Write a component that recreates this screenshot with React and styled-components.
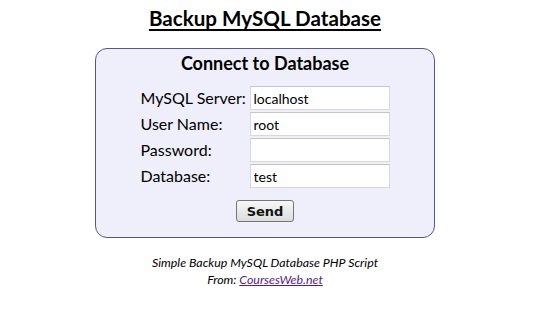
import styled, { createGlobalStyle } from "styled-components";

const GlobalStyle = createGlobalStyle`
  body {
    margin: 0;
    background: #ffffff;
    font-family: Lato, "Open Sans", sans-serif;
    color: #000;
  }
`;

const Page = styled.div`
  width: 530px;
  display: flex;
  flex-direction: column;
  align-items: center;
  padding-top: 4px;
`;

const Title = styled.h1`
  margin: 0;
  font-size: 20.6px;
  font-weight: 700;
  text-decoration: underline;
  text-underline-offset: 3px;
  line-height: 28px;
`;

const Box = styled.form`
  margin-top: 16px;
  width: 338px;
  height: 188px;
  box-sizing: content-box;
  border: 1px solid #55558f;
  border-radius: 12px;
  background: #efeffb;
  display: flex;
  flex-direction: column;
  align-items: center;
`;

const BoxTitle = styled.h2`
  margin: 3px 0 0;
  font-size: 18px;
  font-weight: 700;
  line-height: 22px;
`;

const Fields = styled.div`
  margin-top: 12px;
  display: grid;
  grid-template-columns: 109px 140px;
  row-gap: 2px;
  align-items: center;
`;

const Label = styled.label`
  font-size: 16px;
  line-height: 24px;
`;

const Input = styled.input`
  box-sizing: border-box;
  width: 140px;
  height: 24px;
  border: 1px solid #d8d8d8;
  border-top-color: #c4c4c4;
  background: #fff;
  padding: 0 3px;
  font-family: inherit;
  font-size: 14px;
  color: #000;
  outline: none;
`;

const Send = styled.button`
  margin-top: 12px;
  width: 58px;
  height: 22px;
  border: 1px solid #767676;
  border-radius: 3px;
  background: linear-gradient(#f7f7f7, #dcdcdc);
  font-family: "DejaVu Sans", Verdana, sans-serif;
  font-weight: 700;
  font-size: 13px;
  padding: 0;
  color: #111;
`;

const Footer = styled.div`
  margin-top: 16px;
  text-align: center;
  font-style: italic;
  font-size: 12.4px;
  line-height: 17px;
`;

const Link = styled.a`
  color: #551a8b;
  text-decoration: underline;
`;

const fields = [
  { label: "MySQL Server:", value: "localhost" },
  { label: "User Name:", value: "root" },
  { label: "Password:", value: "", type: "password" },
  { label: "Database:", value: "test" },
];

export default function App() {
  return (
    <>
      <GlobalStyle />
      <Page>
        <Title>Backup MySQL Database</Title>
        <Box onSubmit={(e) => e.preventDefault()}>
          <BoxTitle>Connect to Database</BoxTitle>
          <Fields>
            {fields.map((f) => [
              <Label key={f.label + "l"}>{f.label}</Label>,
              <Input key={f.label + "i"} type={f.type || "text"} defaultValue={f.value} />,
            ])}
          </Fields>
          <Send type="submit">Send</Send>
        </Box>
        <Footer>
          Simple Backup MySQL Database PHP Script
          <br />
          From: <Link href="#">CoursesWeb.net</Link>
        </Footer>
      </Page>
    </>
  );
}
